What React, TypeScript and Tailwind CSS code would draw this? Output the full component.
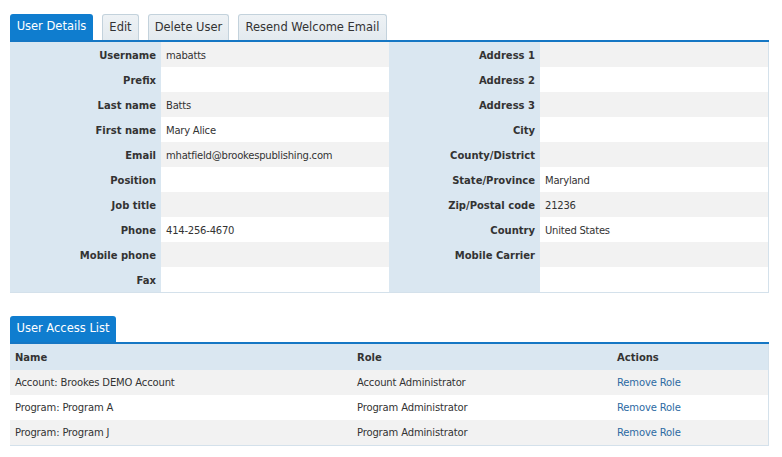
import React from "react";

const LEFT = [
  ["Username", "mabatts"],
  ["Prefix", ""],
  ["Last name", "Batts"],
  ["First name", "Mary Alice"],
  ["Email", "mhatfield@brookespublishing.com"],
  ["Position", ""],
  ["Job title", ""],
  ["Phone", "414-256-4670"],
  ["Mobile phone", ""],
  ["Fax", ""],
];

const RIGHT = [
  ["Address 1", ""],
  ["Address 2", ""],
  ["Address 3", ""],
  ["City", ""],
  ["County/District", ""],
  ["State/Province", "Maryland"],
  ["Zip/Postal code", "21236"],
  ["Country", "United States"],
  ["Mobile Carrier", ""],
  ["", ""],
];

const ACCESS = [
  { name: "Account: Brookes DEMO Account", role: "Account Administrator" },
  { name: "Program: Program A", role: "Program Administrator" },
  { name: "Program: Program J", role: "Program Administrator" },
];

const TABS = [
  { label: "User Details", w: "w-[83px]", active: true },
  { label: "Edit", w: "w-[37px]", active: false },
  { label: "Delete User", w: "w-[81px]", active: false },
  { label: "Resend Welcome Email", w: "w-[149px]", active: false },
];

function Tab({ label, w, active }: { label: string; w: string; active: boolean }) {
  return active ? (
    <div className={`${w} flex h-[26px] items-center justify-center rounded-t-[3px] bg-[#0f7dcf] text-[11.5px] text-white`}>
      {label}
    </div>
  ) : (
    <div
      className={`${w} flex h-[26px] items-center justify-center rounded-t-[3px] border border-b-0 border-[#c3d2dc] bg-gradient-to-b from-[#eef2f5] to-[#e3eaef] text-[11.5px] text-[#333]`}
    >
      {label}
    </div>
  );
}

export default function App() {
  return (
    <div className="min-h-screen bg-white pl-[10px] pt-[14px] text-[#333]" style={{ fontFamily: '"DejaVu Sans", Verdana, sans-serif' }}>
      <div className="flex items-end gap-[9px]">
        {TABS.map((t) => (
          <Tab key={t.label} {...t} />
        ))}
      </div>
      <div className="w-[759px] border-t-2 border-[#1677c4]">
        <div className="border-b border-r border-[#d4e1eb]">
          {LEFT.map((l, i) => {
            const r = RIGHT[i];
            const bg = i % 2 === 0 ? "bg-[#f2f2f2]" : "bg-white";
            return (
              <div key={i} className="grid h-[25px] grid-cols-[151px_228px_151px_1fr] text-[10px] leading-[12px]">
                <div className="flex items-center justify-end bg-[#dae7f1] pr-[5px] pt-[2px] font-bold">{l[0]}</div>
                <div className={`flex items-center pl-[5px] pt-[2px] tracking-[-0.22px] ${bg}`}>{l[1]}</div>
                <div className="flex items-center justify-end bg-[#dae7f1] pr-[5px] pt-[2px] font-bold">{r[0]}</div>
                <div className={`flex items-center pl-[5px] pt-[2px] tracking-[-0.22px] ${bg}`}>{r[1]}</div>
              </div>
            );
          })}
        </div>
      </div>

      <div className="mt-[23px] flex">
        <Tab label="User Access List" w="w-[106px]" active />
      </div>
      <div className="w-[759px] border-t-2 border-[#1677c4]">
        <div className="border-b border-r border-[#d4e1eb] text-[10px] leading-[12px]">
          <div className="grid h-[26px] grid-cols-[342px_260px_1fr] items-center bg-[#dae7f1] pt-[1px] font-bold">
            <div className="pl-[5px]">Name</div>
            <div className="pl-[5px]">Role</div>
            <div className="pl-[5px]">Actions</div>
          </div>
          {ACCESS.map((a, i) => (
            <div
              key={a.name}
              className={`grid h-[25px] grid-cols-[342px_260px_1fr] items-center pt-[1px] tracking-[-0.15px] ${i % 2 === 0 ? "bg-[#f2f2f2]" : "bg-white"}`}
            >
              <div className="pl-[5px]">{a.name}</div>
              <div className="pl-[5px]">{a.role}</div>
              <div className="pl-[5px]">
                <a href="#" className="text-[#2d6aa3]">
                  Remove Role
                </a>
              </div>
            </div>
          ))}
        </div>
      </div>
    </div>
  );
}
